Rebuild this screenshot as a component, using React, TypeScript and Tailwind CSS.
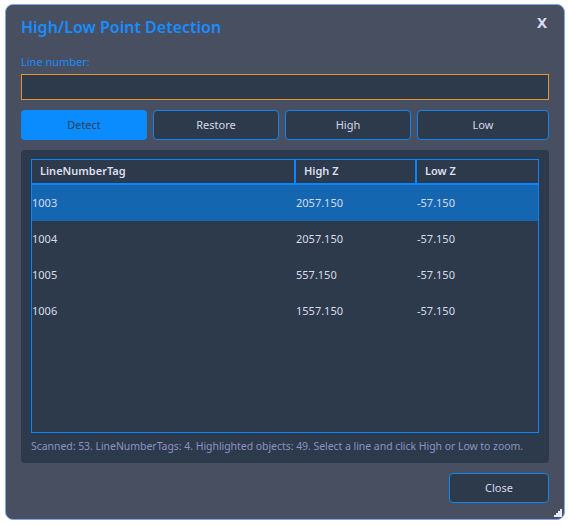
import { useState } from "react";

type Row = { tag: string; high: string; low: string };

const rows: Row[] = [
  { tag: "1003", high: "2057.150", low: "-57.150" },
  { tag: "1004", high: "2057.150", low: "-57.150" },
  { tag: "1005", high: "557.150", low: "-57.150" },
  { tag: "1006", high: "1557.150", low: "-57.150" },
];

function ResizeGrip() {
  const dots = [
    [6, 0],
    [4, 2], [6, 2],
    [2, 4], [4, 4], [6, 4],
    [0, 6], [2, 6], [4, 6], [6, 6],
  ];
  return (
    <svg width="8" height="8" viewBox="0 0 8 8" className="absolute right-[2px] bottom-[2px]">
      {dots.map(([x, y], i) => (
        <rect key={i} x={x} y={y} width="2" height="2" fill="#e6e8f2" />
      ))}
    </svg>
  );
}

export default function App() {
  const [selected, setSelected] = useState(0);
  const [line, setLine] = useState("");

  return (
    <div className="w-[569px] h-[526px] bg-white pt-[4px] pl-[5px]" style={{ fontFamily: '"Noto Sans", "Open Sans", sans-serif' }}>
      <div className="relative w-[560px] h-[516px] rounded-[8px] border border-[#7fa6e0] bg-[#474f61] px-[15px] flex flex-col">
        <div className="flex items-start justify-between pt-[11px]">
          <h1 className="text-[16px] leading-[22px] font-semibold text-[#1a8cff]">High/Low Point Detection</h1>
          <button className="text-[15px] leading-[16px] font-bold text-[#dcdcf4] mr-[2px] mt-[-2px]">X</button>
        </div>

        <label className="mt-[17px] text-[11px] leading-[14px] text-[#1a8cff]">Line number:</label>
        <input
          value={line}
          onChange={(e) => setLine(e.target.value)}
          className="mt-[5px] h-[26px] w-full border border-[#e8952c] bg-[#2d3a4b] px-2 text-[12px] text-[#dde0ef] outline-none"
        />

        <div className="mt-[10px] grid grid-cols-[126px_126px_126px_1fr] gap-[6px]">
          <button className="h-[30px] rounded-[4px] bg-[#0a8cff] text-[11px] text-[#2e3f5a]">Detect</button>
          <button className="h-[30px] rounded-[4px] border border-[#1085f0] bg-[#2d3a4b] text-[11px] text-[#d4d7ea]">Restore</button>
          <button className="h-[30px] rounded-[4px] border border-[#1085f0] bg-[#2d3a4b] text-[11px] text-[#d4d7ea]">High</button>
          <button className="h-[30px] rounded-[4px] border border-[#1085f0] bg-[#2d3a4b] text-[11px] text-[#d4d7ea]">Low</button>
        </div>

        <div className="mt-[10px] h-[313px] rounded-[4px] bg-[#2d3a4b] px-[10px] pt-[9px] flex flex-col">
          <div className="h-[274px] border border-[#0a84ff] flex flex-col">
            <div className="flex h-[25px] border-b-2 border-[#0a84ff] text-[11px] font-semibold text-[#dcdfef]">
              <div className="w-[264px] pl-[8px] flex items-center border-r-2 border-[#0a84ff]">LineNumberTag</div>
              <div className="w-[121px] pl-[8px] flex items-center border-r-2 border-[#0a84ff]">High Z</div>
              <div className="flex-1 pl-[8px] flex items-center">Low Z</div>
            </div>
            {rows.map((r, i) => (
              <div
                key={r.tag}
                onClick={() => setSelected(i)}
                className={`flex h-[36px] items-center text-[11px] text-[#d8dbec] ${i === selected ? "bg-[#1566b0]" : ""}`}
              >
                <div className="w-[264px]">{r.tag}</div>
                <div className="w-[121px]">{r.high}</div>
                <div className="flex-1">{r.low}</div>
              </div>
            ))}
          </div>
          <p className="mt-[6px] whitespace-nowrap text-[10.5px] leading-[14px] tracking-[-0.05px] text-[#8c92c4]">
            Scanned: 53. LineNumberTags: 4. Highlighted objects: 49. Select a line and click High or Low to zoom.
          </p>
        </div>

        <div className="mt-[10px] flex justify-end">
          <button className="h-[30px] w-[100px] rounded-[4px] border border-[#1085f0] bg-[#2d3a4b] text-[11px] text-[#d4d7ea]">Close</button>
        </div>

        <ResizeGrip />
      </div>
    </div>
  );
}
